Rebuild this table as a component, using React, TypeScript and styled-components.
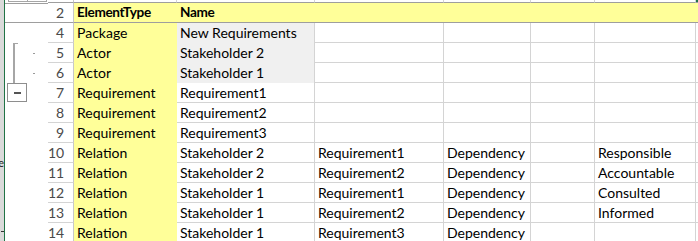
import React from 'react';
import styled, { createGlobalStyle, css } from 'styled-components';

const GlobalStyle = createGlobalStyle`
  html, body {
    margin: 0;
    padding: 0;
    background: #ffffff;
    overflow: hidden;
  }
  body {
    font-family: Lato, "Liberation Sans", sans-serif;
  }
`;

const COLUMNS = '43px 26px 103px 138px 129px 87px 64px 101px 1fr';
const GRID = '#d4d4d4';
const DARK = '#9e9e9e';
const YELLOW = '#ffff99';
const GRAY = '#f0f0f0';
const GREEN = '#217346';

const Page = styled.div`
  display: flex;
  width: 698px;
  height: 241px;
  overflow: hidden;
`;

const LeftEdge = styled.div`
  width: 5px;
  flex: none;
  box-sizing: border-box;
  background: #dadada;
  border-right: 1px solid ${GREEN};
  display: flex;
  flex-direction: column;
  align-items: flex-end;
  overflow: hidden;
`;

const EdgeGlyph = styled.span`
  margin-top: 157px;
  font-size: 11px;
  line-height: 12px;
  color: #222;
`;

const EdgeTick = styled.span`
  margin-top: 62px;
  width: 3px;
  height: 1px;
  background: #333;
`;

const Sheet = styled.div`
  flex: 1;
  display: flex;
  flex-direction: column;
`;

const Row = styled.div<{ $h?: number }>`
  display: grid;
  grid-template-columns: ${COLUMNS};
  height: ${(p) => p.$h ?? 20}px;
  flex: none;
`;

type Fill = 'none' | 'yellow' | 'gray';
type Line = 'none' | 'light' | 'dark';

const fills: Record<Fill, string> = { none: '#ffffff', yellow: YELLOW, gray: GRAY };
const lines: Record<Line, string> = { none: 'none', light: `1px solid ${GRID}`, dark: `1px solid ${DARK}` };

const Cell = styled.div<{ $fill?: Fill; $bold?: boolean; $right?: boolean; $bottom?: Line; $green?: boolean }>`
  box-sizing: border-box;
  padding: 0 3px;
  font-size: 14px;
  line-height: 19px;
  white-space: nowrap;
  overflow: hidden;
  color: #000;
  background: ${(p) => fills[p.$fill ?? 'none']};
  border-right: ${(p) => (p.$right ? `1px solid ${GRID}` : 'none')};
  border-bottom: ${(p) => lines[p.$bottom ?? 'none']};
  ${(p) =>
    p.$bold &&
    css`
      font-weight: 700;
      font-size: 13.6px;
      letter-spacing: -0.35px;
    `}
  ${(p) =>
    p.$green &&
    css`
      border-top: 2px solid ${GREEN};
    `}
`;

const RowNum = styled.div<{ $bottom?: Line }>`
  box-sizing: border-box;
  padding-right: 9px;
  text-align: right;
  font-size: 14px;
  line-height: 19px;
  color: #4a4a4a;
  border-right: 1px solid #c8c8c8;
  border-bottom: ${(p) => lines[p.$bottom ?? 'light']};
`;

const Gutter = styled.div<{ $bottom?: Line }>`
  box-sizing: border-box;
  display: flex;
  align-items: flex-start;
  border-bottom: ${(p) => lines[p.$bottom ?? 'none']};
`;

const OutlineButton = styled.span<{ $first?: boolean }>`
  box-sizing: border-box;
  width: 20px;
  height: 2px;
  margin-left: ${(p) => (p.$first ? 3 : -1)}px;
  border: 1px solid #a6a6a6;
  border-top: none;
`;

const Bracket = styled.span<{ $top?: boolean }>`
  box-sizing: border-box;
  margin-left: 8px;
  width: 5px;
  height: 20px;
  border-left: 2px solid #a6a6a6;
  border-top: ${(p) => (p.$top ? '1px solid #a6a6a6' : 'none')};
`;

const Dot = styled.span`
  margin-left: 15px;
  margin-top: 10px;
  width: 2px;
  height: 1px;
  background: #9a9a9a;
`;

const MinusBox = styled.span`
  box-sizing: border-box;
  margin-left: 2px;
  width: 20px;
  height: 19px;
  border: 1px solid #8e8e8e;
  display: flex;
  align-items: center;
  justify-content: center;
`;

const MinusBar = styled.span`
  width: 7px;
  height: 2px;
  background: #555;
`;

type Marker = 'none' | 'start' | 'mid' | 'minus';

interface DataRow {
  n: number;
  cells: string[];
  grayName?: boolean;
  marker?: Marker;
}

const rows: DataRow[] = [
  { n: 4, cells: ['Package', 'New Requirements', '', '', '', '', ''], grayName: true },
  { n: 5, cells: ['Actor', 'Stakeholder 2', '', '', '', '', ''], grayName: true, marker: 'start' },
  { n: 6, cells: ['Actor', 'Stakeholder 1', '', '', '', '', ''], grayName: true, marker: 'mid' },
  { n: 7, cells: ['Requirement', 'Requirement1', '', '', '', '', ''], marker: 'minus' },
  { n: 8, cells: ['Requirement', 'Requirement2', '', '', '', '', ''] },
  { n: 9, cells: ['Requirement', 'Requirement3', '', '', '', '', ''] },
  { n: 10, cells: ['Relation', 'Stakeholder 2', 'Requirement1', 'Dependency', '', 'Responsible', ''] },
  { n: 11, cells: ['Relation', 'Stakeholder 2', 'Requirement2', 'Dependency', '', 'Accountable', ''] },
  { n: 12, cells: ['Relation', 'Stakeholder 1', 'Requirement1', 'Dependency', '', 'Consulted', ''] },
  { n: 13, cells: ['Relation', 'Stakeholder 1', 'Requirement2', 'Dependency', '', 'Informed', ''] },
  { n: 14, cells: ['Relation', 'Stakeholder 1', 'Requirement3', 'Dependency', '', '', ''] },
];

const GutterMarker: React.FC<{ marker?: Marker }> = ({ marker }) => {
  if (marker === 'start' || marker === 'mid') {
    return (
      <Gutter>
        <Bracket $top={marker === 'start'} />
        <Dot />
      </Gutter>
    );
  }
  if (marker === 'minus') {
    return (
      <Gutter>
        <MinusBox>
          <MinusBar />
        </MinusBox>
      </Gutter>
    );
  }
  return <Gutter />;
};

export default function App() {
  return (
    <>
      <GlobalStyle />
      <Page>
        <LeftEdge>
          <EdgeGlyph>e</EdgeGlyph>
          <EdgeTick />
        </LeftEdge>
        <Sheet>
          <Row $h={3}>
            <Gutter>
              <OutlineButton $first />
              <OutlineButton />
            </Gutter>
            <RowNum $bottom="dark" />
            {[0, 1, 2, 3, 4, 5].map((i) => (
              <Cell key={i} $right $bottom="dark" />
            ))}
            <Cell $right $bottom="dark" $green />
            <Cell $bottom="dark" />
          </Row>

          <Row>
            <Gutter $bottom="dark" />
            <RowNum $bottom="dark">2</RowNum>
            <Cell $fill="yellow" $bold $bottom="dark">ElementType</Cell>
            <Cell $fill="yellow" $bold $bottom="dark">Name</Cell>
            {[0, 1, 2, 3, 4].map((i) => (
              <Cell key={i} $fill="yellow" $bottom="dark" />
            ))}
          </Row>

          {rows.map((r) => (
            <Row key={r.n}>
              <GutterMarker marker={r.marker} />
              <RowNum>{r.n}</RowNum>
              <Cell $fill="yellow">{r.cells[0]}</Cell>
              {r.grayName ? (
                <Cell $fill="gray" $right>{r.cells[1]}</Cell>
              ) : (
                <Cell $right $bottom="light">{r.cells[1]}</Cell>
              )}
              {r.cells.slice(2).map((text, i) => (
                <Cell key={i} $right={i < 4} $bottom="light">{text}</Cell>
              ))}
            </Row>
          ))}
        </Sheet>
      </Page>
    </>
  );
}
